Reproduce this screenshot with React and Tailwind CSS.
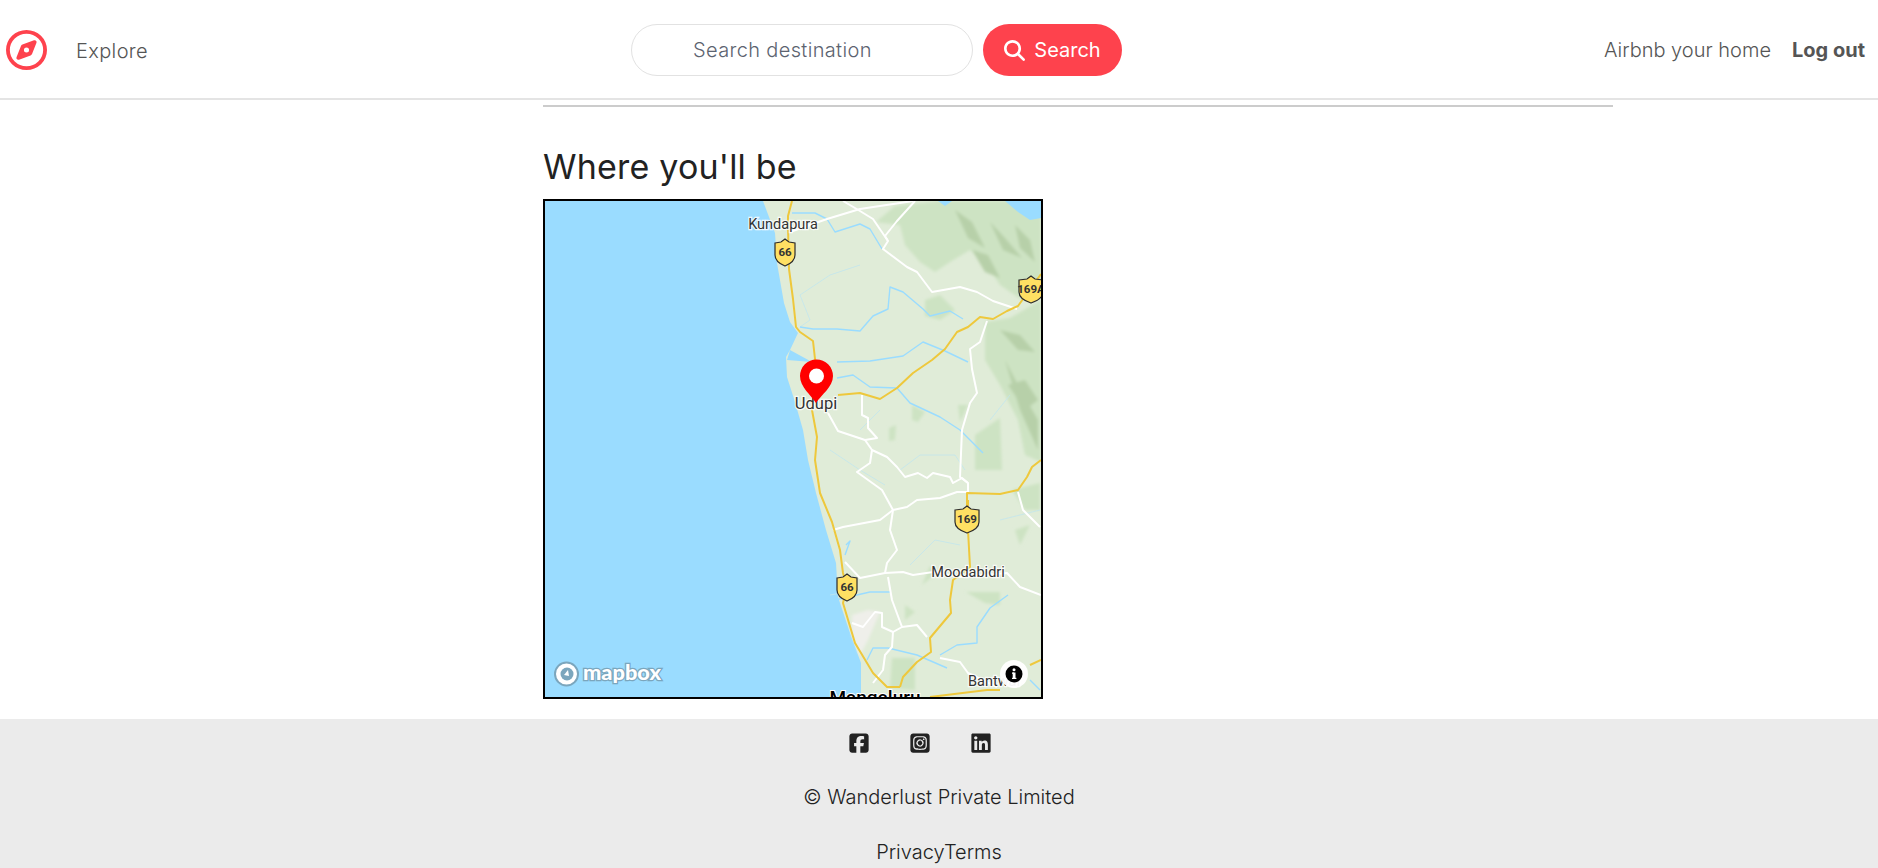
import React from 'react';
import { FaRegCompass, FaMagnifyingGlass, FaSquareFacebook, FaSquareInstagram, FaLinkedin } from 'react-icons/fa6';

const FONT = 'font-["Inter","Liberation_Sans",sans-serif]';

const LAND = 'M763 201 L775 233 L777 263 L784 303 L790 322 L798 333 L790 350 L786 357 L787 377 L795 402 L803 430 L808 460 L816 493 L826 530 L836 563 L838 597 L849 630 L861 663 L861 697 L1041 697 L1041 201 Z';

const FOREST = [
  'M876 222 L895 206 L940 201 L1041 201 L1041 290 L1022 300 L1000 285 L985 262 L970 250 L950 262 L935 272 L920 262 L905 245 L900 225 Z',
  'M985 322 L1010 318 L1041 300 L1041 462 L1025 455 L1018 420 L1000 385 L985 360 Z',
  'M925 300 L940 295 L955 310 L940 320 L925 316 Z',
  'M975 435 L1000 418 L1002 470 L975 470 Z',
  'M889 428 L896 425 L895 440 L889 441 Z',
  'M912 405 L925 412 L918 422 L912 420 Z',
  'M958 405 L968 405 L960 422 Z',
  'M1012 490 L1040 483 L1040 510 L1025 510 Z',
  'M966 592 L1000 592 L1000 605 L985 603 Z',
  'M892 658 L915 658 L915 690 L890 688 Z',
  'M930 566 L938 572 L922 585 Z',
  'M905 605 L915 612 L905 620 Z',
  'M1015 530 L1030 525 L1020 545 Z',
];

const HILLS = [
  'M955 210 L972 222 L985 248 L968 238 Z',
  'M972 250 L988 255 L1000 278 L985 272 Z',
  'M990 222 L1005 238 L1022 258 L1003 250 Z',
  'M1015 225 L1030 240 L1035 262 L1020 248 Z',
  'M1005 360 L1018 385 L1038 420 L1038 450 L1020 410 Z',
  'M1000 330 L1020 335 L1035 352 L1018 350 Z',
  'M1008 385 L1025 380 L1038 400 L1025 410 Z',
];

const BUILT = 'M852 615 L868 610 L880 612 L868 640 L860 655 L852 635 Z';

const WATER = [
  'M1005 201 L1041 201 L1041 218 L1030 220 L1018 212 Z',
  'M938 201 L952 201 L945 206 Z',
  'M787 360 L812 362 L790 350 Z',
];

const RIVERS = [
  'M792 213 L815 213 L827 219 L835 232 L860 224 L870 229 L882 249',
  'M800 327 L813 329 L837 329 L860 331 L873 316 L888 309 L890 287 L903 292 L923 309 L930 316 L950 311 L963 319',
  'M837 362 L870 361 L903 356 L923 342 L945 351 L968 362',
  'M837 378 L853 375 L870 387 L897 388 L910 403 L940 417 L960 430 L983 453',
  'M1008 595 L990 608 L977 627 L977 643 L957 645 L940 655',
  'M867 660 L873 648 L888 648 L917 655 L947 668',
  'M846 545 L850 541 L845 555',
  'M835 600 L870 592 L890 592',
  'M1030 680 L1040 690',
];

const PALE_RIVERS = [
  'M800 295 L830 275 L860 265 M800 295 L810 320 L800 327',
  'M880 410 L860 430 M900 470 L920 455 L955 455 L965 470',
  'M830 450 L860 470 L885 485',
  'M910 565 L935 540 L960 545 M1000 520 L1040 510',
  'M990 420 L1010 395 M860 590 L830 595',
];

const WHITE_ROADS = [
  'M843 201 L860 211 L873 219 L888 241 L883 249 L907 267 L917 272 L932 292 L960 287 L977 292 L993 301 L1017 309',
  'M790 232 L827 219 L860 209 L913 201',
  'M915 201 L897 221 L885 236 L888 241',
  'M987 321 L980 342 L970 349 L972 369 L977 393 L970 403 L962 430 L960 477 L968 483 L968 493',
  'M862 395 L862 415 L868 418 L868 428 L877 438 L865 440 L838 431 L828 413',
  'M865 440 L872 450 L870 463 L857 472 L882 490 L893 510 L890 530 L897 550 L887 563 L885 573 L860 578 L845 562',
  'M872 450 L887 457 L897 467 L905 477 L918 473 L927 478 L933 473 L950 477 L953 483 L962 478 L968 483',
  'M968 492 L957 492 L940 498 L917 500 L907 507 L893 510 L880 520 L843 527 L833 530',
  'M1018 492 L1023 510 L1040 527',
  'M885 573 L903 572 L913 575 L933 572 L960 577 L1007 573 L1020 587 L1041 595',
  'M888 577 L892 600 L902 627 L917 625 L927 637',
  'M902 627 L893 632 L882 627 L882 613 L875 612 L863 627 L852 623',
  'M893 632 L892 647 L885 655 L883 670 L873 683',
  'M940 658 L960 662 L968 673 L997 687',
];

const YELLOW_ROADS = [
  'M792 201 L788 216 L788 226 L789 269 L793 299 L796 327 L800 332 L813 341 L815 359 L818 375 L812 410 L817 437 L815 460 L820 493 L832 522 L840 550 L843 573 L847 587 L843 603 L855 643 L873 673 L887 687 L900 687',
  'M838 395 L860 393 L880 399 L897 388 L913 373 L932 360 L945 349 L957 332 L968 327 L980 317 L993 319 L1007 311 L1018 306 L1041 274',
  'M967 507 L967 493 L1000 494 L1018 490 L1027 477 L1032 467 L1041 460',
  'M968 500 L968 530 L970 567 L953 580 L950 600 L951 613 L930 638 L931 652 L917 662 L903 677 L900 687',
  'M930 697 L987 690 L1000 690',
  'M1030 665 L1041 660',
];

const LABELS = [
  { x: 783, y: 229, size: 14.5, text: 'Kundapura' },
  { x: 816, y: 409, size: 16.5, text: 'Udupi' },
  { x: 968, y: 577, size: 14.5, text: 'Moodabidri' },
  { x: 994, y: 686, size: 14.5, text: 'Bantwal' },
];

const SHIELDS = [
  { x: 785, y: 252, w: 20, text: '66' },
  { x: 847, y: 587, w: 20, text: '66' },
  { x: 967, y: 519, w: 24, text: '169' },
  { x: 1031, y: 289, w: 24, text: '169A' },
];

function Shield({ x, y, w, text }) {
  const h = w / 2;
  return (
    <g>
      <path
        d={`M${x - h} ${y - 9} L${x - 4} ${y - 10} L${x} ${y - 13} L${x + 4} ${y - 10} L${x + h} ${y - 9} L${x + h} ${y + 3} Q${x + h} ${y + 10} ${x} ${y + 14} Q${x - h} ${y + 10} ${x - h} ${y + 3} Z`}
        fill="#ffe063"
        stroke="#2b2b2b"
        strokeWidth="1.2"
      />
      <text x={x} y={y + 4} textAnchor="middle" fontFamily="Roboto, sans-serif" fontWeight="700" fontSize="11.5" fill="#333">{text}</text>
    </g>
  );
}

function MapView() {
  return (
    <div className="w-[500px] h-[500px] border-2 border-black relative overflow-hidden bg-[#9adcff]">
      <svg viewBox="545 201 496 496" className="block w-full h-full">
        <defs>
          <filter id="soft" x="-5%" y="-5%" width="110%" height="110%">
            <feGaussianBlur stdDeviation="1.6" />
          </filter>
        </defs>
        <path d={LAND} fill="#e0ecd8" />
        <g filter="url(#soft)">
          {FOREST.map((d) => <path key={d} d={d} fill="#cde3c3" />)}
          {HILLS.map((d) => <path key={d} d={d} fill="#b7d0a9" />)}
          <path d={BUILT} fill="#efefea" />
        </g>
        {WATER.map((d) => <path key={d} d={d} fill="#9adcff" />)}
        {PALE_RIVERS.map((d) => <path key={d} d={d} fill="none" stroke="#c2e6ee" strokeWidth="0.8" />)}
        {RIVERS.map((d) => <path key={d} d={d} fill="none" stroke="#9adcff" strokeWidth="1.4" strokeLinejoin="round" />)}
        {WHITE_ROADS.map((d) => <path key={d} d={d} fill="none" stroke="#fff" strokeWidth="2" strokeLinejoin="round" />)}
        {YELLOW_ROADS.map((d) => <path key={d} d={d} fill="none" stroke="#eec83c" strokeWidth="2" strokeLinejoin="round" />)}
        {LABELS.map((l) => (
          <text key={l.text} x={l.x} y={l.y} textAnchor="middle" fontFamily="Roboto, sans-serif" fontSize={l.size} fill="#333" stroke="#fff" strokeOpacity="0.8" strokeWidth="2.5" paintOrder="stroke">{l.text}</text>
        ))}
        <text x="875" y="704" textAnchor="middle" fontFamily="Roboto, sans-serif" fontWeight="500" fontSize="19" fill="#000" stroke="#fff" strokeWidth="2" paintOrder="stroke">Mangaluru</text>
        {SHIELDS.map((s) => <Shield key={s.text + s.y} {...s} />)}
        <path d="M816 403 C811 395 800 387 800 376 A16.500 16.500 0 0 1 833 376 C833 387 821 395 816 403 Z" fill="#ff0000" />
        <circle cx="816.500" cy="376" r="7.500" fill="#fff" />

        {/* mapbox mark */}
        <circle cx="566.500" cy="674" r="11.500" fill="#fff" stroke="#7ba6bd" strokeWidth="2" />
        <circle cx="567" cy="674" r="6.500" fill="#7ba6bd" />
        <path d="M564 675 L568 670 L569 676 Z" fill="#fff" />
        <text x="583" y="680" fontFamily="Lato, sans-serif" fontWeight="900" fontSize="21" fill="#fff" stroke="#7ba6bd" strokeWidth="2.500" paintOrder="stroke" textLength="78" lengthAdjust="spacingAndGlyphs">mapbox</text>

        {/* attribution button */}
        <circle cx="1014" cy="674" r="14" fill="#fff" fillOpacity="0.95" />
        <circle cx="1014" cy="674" r="8.500" fill="#000" />
        <rect x="1012.700" y="672.500" width="2.800" height="6" fill="#fff" />
        <rect x="1012" y="672.500" width="2" height="1.300" fill="#fff" />
        <rect x="1012" y="677.800" width="4.400" height="1.200" fill="#fff" />
        <circle cx="1014" cy="669.800" r="1.500" fill="#fff" />
      </svg>
    </div>
  );
}

export default function App() {
  return (
    <div className={`${FONT} w-full h-[868px] overflow-hidden bg-white flex flex-col`}>
      <nav className="h-[100px] shrink-0 border-b-2 border-[#e4e4e4] flex items-center justify-between pt-[2px] pl-[6px] pr-[13px]">
        <div className="flex items-center gap-[29px]">
          <FaRegCompass preserveAspectRatio="none" className="w-[41px] h-[40px] text-[#fe424d]" />
          <a className="text-[20px] font-light text-[#555] tracking-[0.35px] relative top-[1px]">Explore</a>
        </div>
        <div className="flex items-center gap-[10px] ml-[1px]">
          <div className="w-[342px] h-[52px] rounded-full border border-[#e2e2e2] flex items-center pl-[61px] text-[20px] font-light text-[#5c6370] tracking-[0.35px]">Search destination</div>
          <button className="w-[139px] h-[52px] rounded-[26px] bg-[#fe424d] text-white text-[20px] font-normal flex items-center justify-center gap-[9px]">
            <FaMagnifyingGlass className="w-[21px] h-[21px]" />
            Search
          </button>
        </div>
        <div className="flex items-center gap-[21px] text-[20px] text-[#555]">
          <a className="font-light">Airbnb your home</a>
          <a className="font-bold">Log out</a>
        </div>
      </nav>

      <main className="flex-1 pl-[543px] pt-[5px]">
        <hr className="w-[1070px] border-0 border-t-2 border-[#cccccc]" />
        <h2 className="mt-[41px] text-[34px] leading-[38px] font-normal text-[#222222] mb-[13px] tracking-[0.2px]">Where you'll be</h2>
        <MapView />
      </main>

      <footer className="h-[149px] shrink-0 bg-[#ebebeb] flex flex-col items-center text-[#222222] text-[20px] font-light">
        <div className="flex gap-[39px] pt-[13px] pr-[38px]">
          <FaSquareFacebook className="w-[22px] h-[22px]" />
          <FaSquareInstagram className="w-[22px] h-[22px]" />
          <FaLinkedin className="w-[22px] h-[22px]" />
        </div>
        <p className="mt-[28px] leading-[30px]">© Wanderlust Private Limited</p>
        <p className="mt-[25px] leading-[30px]">PrivacyTerms</p>
      </footer>
    </div>
  );
}
